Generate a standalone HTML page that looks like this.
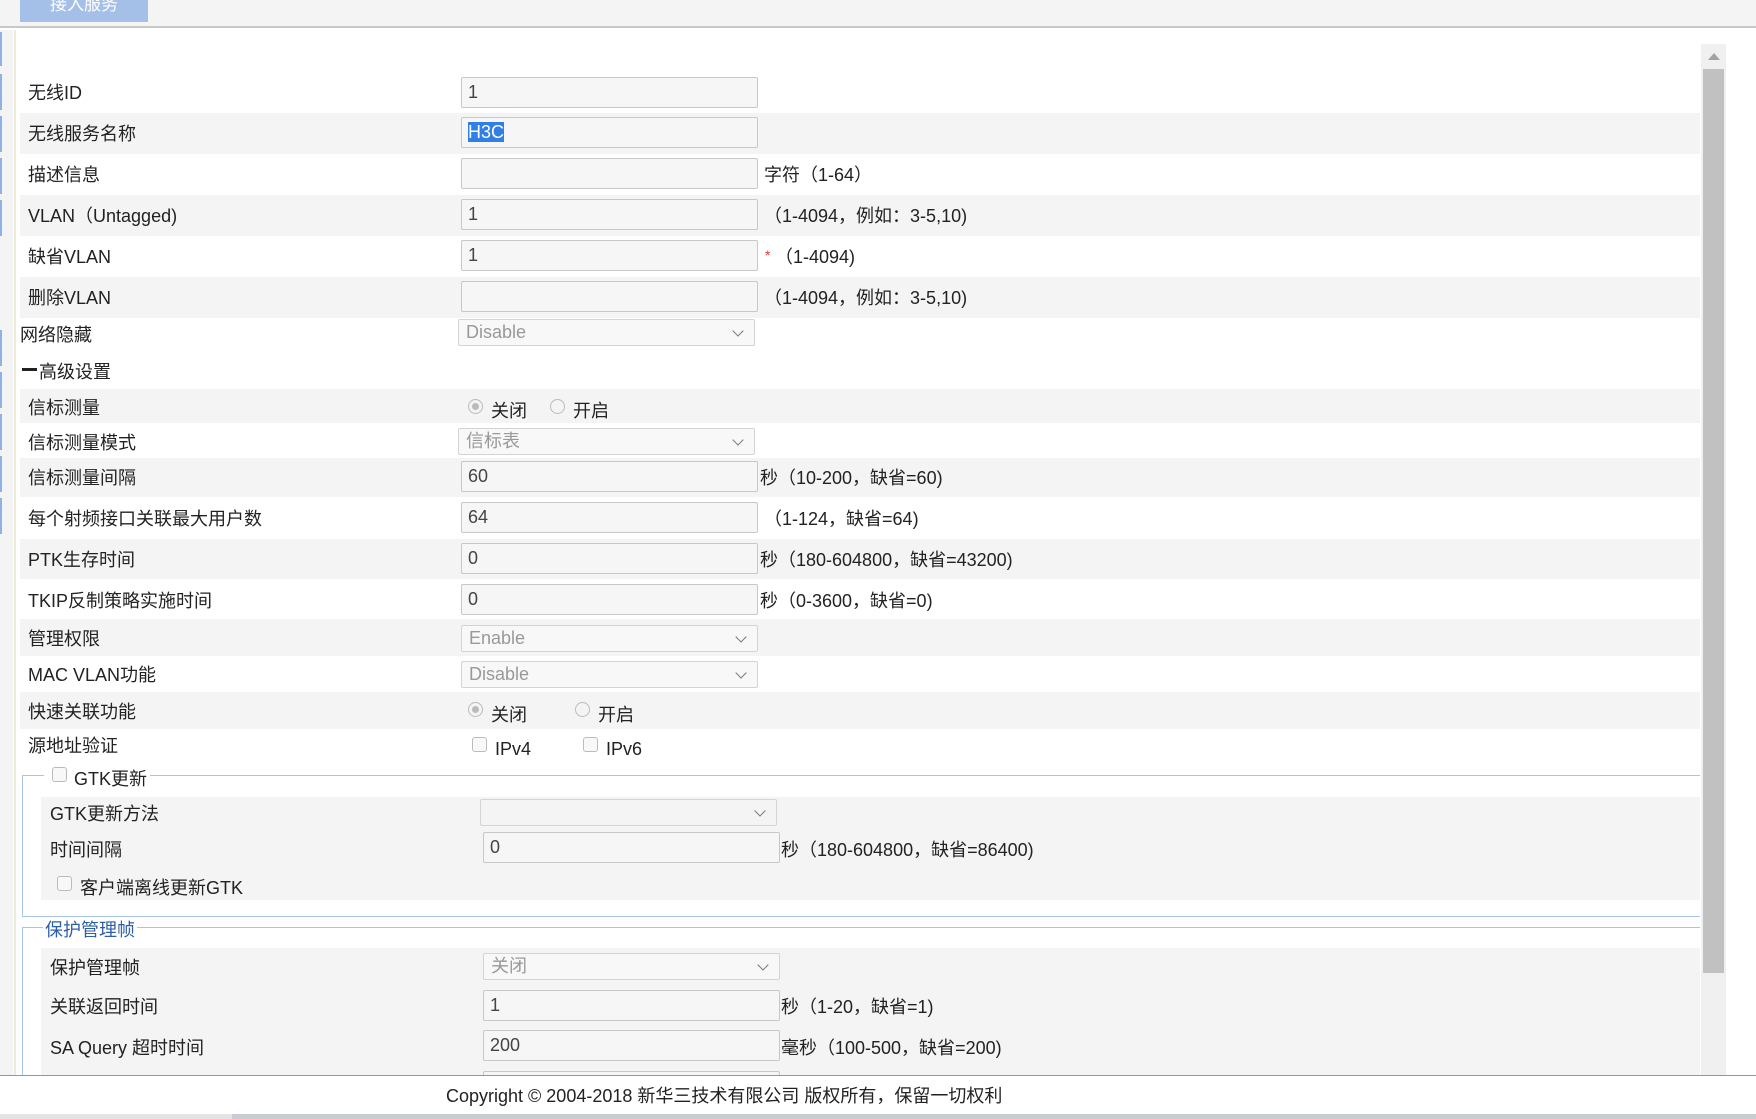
<!DOCTYPE html>
<html><head><meta charset="utf-8">
<style>
*{box-sizing:border-box;margin:0;padding:0}
body{width:1756px;height:1119px;position:relative;overflow:hidden;background:#fff;font-family:"Liberation Sans","Noto Sans CJK SC",sans-serif;font-size:18px;color:#222}
.a{position:absolute}
.row{position:absolute;left:20px;width:1680px}
.g{background:#f4f4f4}
.lb{position:absolute;white-space:nowrap;line-height:20px;margin-top:1px}
.in{position:absolute;width:297px;height:31px;border:1px solid #c8c8c8;border-radius:2px;background:#f6f6f6;padding-left:6px;line-height:29px;font-size:18px;color:#444}
.sel{position:absolute;width:297px;height:27px;border:1px solid #d4d4d4;border-radius:2px;background:#f8f8f8;padding-left:7px;line-height:25px;font-size:18px;color:#999}
.sel:after{content:"";position:absolute;right:12px;top:7px;width:7px;height:7px;border-right:1.5px solid #777;border-bottom:1.5px solid #777;transform:rotate(45deg)}
.rad{position:absolute;width:15px;height:15px;border:1px solid #bbb;border-radius:50%;background:#f4f4f4}
.rad.on:after{content:"";position:absolute;left:3px;top:3px;width:7px;height:7px;border-radius:50%;background:#bbb}
.cb{position:absolute;width:15px;height:15px;border:1px solid #bbb;border-radius:3px;background:#f8f8f8}
.h{position:absolute;white-space:nowrap;line-height:20px;color:#222;margin-top:1px}
</style></head><body>
<div class="a" style="left:0;top:0;width:1756px;height:28px;background:#f4f4f4;border-bottom:2px solid #c8c8c8"></div>
<div class="a" style="left:20px;top:0;width:128px;height:22px;background:#a4c0e8;color:#fff;text-align:center;line-height:10px;font-size:17px;overflow:hidden">接入服务</div>
<div class="a" style="left:0;top:30px;width:13px;height:1045px;background:#f4f4f4"></div>
<div class="a" style="left:14px;top:30px;width:2px;height:1045px;background:#ecebd8"></div>
<div class="a" style="left:0;top:32px;width:2px;height:34px;background:#8fb2e4"></div>
<div class="a" style="left:0;top:74px;width:2px;height:36px;background:#8fb2e4"></div>
<div class="a" style="left:0;top:116px;width:2px;height:36px;background:#8fb2e4"></div>
<div class="a" style="left:0;top:158px;width:2px;height:36px;background:#8fb2e4"></div>
<div class="a" style="left:0;top:200px;width:2px;height:36px;background:#8fb2e4"></div>
<div class="a" style="left:0;top:330px;width:2px;height:36px;background:#8fb2e4"></div>
<div class="a" style="left:0;top:372px;width:2px;height:36px;background:#8fb2e4"></div>
<div class="a" style="left:0;top:414px;width:2px;height:36px;background:#8fb2e4"></div>
<div class="a" style="left:0;top:456px;width:2px;height:36px;background:#8fb2e4"></div>
<div class="a" style="left:0;top:498px;width:2px;height:36px;background:#8fb2e4"></div>
<div class="a" style="left:1701px;top:44px;width:25px;height:1031px;background:#f0f0f0"></div>
<div class="a" style="left:1708px;top:53px;width:0;height:0;border-left:6px solid transparent;border-right:6px solid transparent;border-bottom:7px solid #a3a3a3"></div>
<div class="a" style="left:1703px;top:69px;width:21px;height:904px;background:#c1c1c1"></div>

<div class="row g" style="top:113px;height:41px"></div>
<div class="row g" style="top:195px;height:41px"></div>
<div class="row g" style="top:277px;height:41px"></div>
<div class="row g" style="top:389px;height:34px"></div>
<div class="row g" style="top:458px;height:39px"></div>
<div class="row g" style="top:539px;height:40px"></div>
<div class="row g" style="top:619px;height:37px"></div>
<div class="row g" style="top:692px;height:37px"></div>

<div class="lb" style="left:28px;top:82px">无线ID</div>
<div class="in" style="left:461px;top:77px">1</div>
<div class="lb" style="left:28px;top:123px">无线服务名称</div>
<div class="in" style="left:461px;top:117px"><span style="background:#2f7fe6;color:#fff">H3C</span></div>
<div class="lb" style="left:28px;top:164px">描述信息</div>
<div class="in" style="left:461px;top:158px"></div>
<div class="h" style="left:764px;top:164px">字符（1-64）</div>
<div class="lb" style="left:28px;top:205px">VLAN（Untagged)</div>
<div class="in" style="left:461px;top:199px">1</div>
<div class="h" style="left:764px;top:205px">（1-4094，例如：3-5,10)</div>
<div class="lb" style="left:28px;top:246px">缺省VLAN</div>
<div class="in" style="left:461px;top:240px">1</div>
<div class="h" style="left:765px;top:244px;color:#e33;font-size:14px">*</div>
<div class="h" style="left:775px;top:246px">（1-4094)</div>
<div class="lb" style="left:28px;top:287px">删除VLAN</div>
<div class="in" style="left:461px;top:281px"></div>
<div class="h" style="left:764px;top:287px">（1-4094，例如：3-5,10)</div>
<div class="lb" style="left:20px;top:324px">网络隐藏</div>
<div class="sel" style="left:458px;top:319px">Disable</div>
<div class="a" style="left:22px;top:368px;width:15px;height:3px;background:#222"></div>
<div class="lb" style="left:39px;top:361px">高级设置</div>

<div class="lb" style="left:28px;top:397px">信标测量</div>
<div class="rad on" style="left:468px;top:399px"></div><div class="h" style="left:491px;top:400px">关闭</div>
<div class="rad" style="left:550px;top:399px"></div><div class="h" style="left:573px;top:400px">开启</div>
<div class="lb" style="left:28px;top:432px">信标测量模式</div>
<div class="sel" style="left:458px;top:428px">信标表</div>
<div class="lb" style="left:28px;top:467px">信标测量间隔</div>
<div class="in" style="left:461px;top:461px">60</div>
<div class="h" style="left:760px;top:467px">秒（10-200，缺省=60)</div>
<div class="lb" style="left:28px;top:508px">每个射频接口关联最大用户数</div>
<div class="in" style="left:461px;top:502px">64</div>
<div class="h" style="left:764px;top:508px">（1-124，缺省=64)</div>
<div class="lb" style="left:28px;top:549px">PTK生存时间</div>
<div class="in" style="left:461px;top:543px">0</div>
<div class="h" style="left:760px;top:549px">秒（180-604800，缺省=43200)</div>
<div class="lb" style="left:28px;top:590px">TKIP反制策略实施时间</div>
<div class="in" style="left:461px;top:584px">0</div>
<div class="h" style="left:760px;top:590px">秒（0-3600，缺省=0)</div>
<div class="lb" style="left:28px;top:628px">管理权限</div>
<div class="sel" style="left:461px;top:625px">Enable</div>
<div class="lb" style="left:28px;top:664px">MAC VLAN功能</div>
<div class="sel" style="left:461px;top:661px">Disable</div>
<div class="lb" style="left:28px;top:701px">快速关联功能</div>
<div class="rad on" style="left:468px;top:702px"></div><div class="h" style="left:491px;top:704px">关闭</div>
<div class="rad" style="left:575px;top:702px"></div><div class="h" style="left:598px;top:704px">开启</div>
<div class="lb" style="left:28px;top:735px">源地址验证</div>
<div class="cb" style="left:472px;top:737px"></div><div class="h" style="left:495px;top:738px">IPv4</div>
<div class="cb" style="left:583px;top:737px"></div><div class="h" style="left:606px;top:738px">IPv6</div>

<div class="a" style="left:22px;top:775px;width:1678px;height:142px;border:1px solid #a8c4e8;border-right:none"></div>
<div class="a" style="left:44px;top:766px;width:106px;height:20px;background:#fff"></div>
<div class="cb" style="left:52px;top:767px"></div>
<div class="h" style="left:74px;top:768px">GTK更新</div>
<div class="a g" style="left:41px;top:797px;width:1659px;height:103px"></div>
<div class="lb" style="left:50px;top:803px">GTK更新方法</div>
<div class="sel" style="left:480px;top:799px;background:#f4f4f4"></div>
<div class="lb" style="left:50px;top:839px">时间间隔</div>
<div class="in" style="left:483px;top:832px">0</div>
<div class="h" style="left:781px;top:839px">秒（180-604800，缺省=86400)</div>
<div class="cb" style="left:57px;top:876px"></div>
<div class="h" style="left:80px;top:877px">客户端离线更新GTK</div>

<div class="a" style="left:22px;top:927px;width:1678px;height:160px;border-top:1px solid #a8c4e8;border-left:1px solid #a8c4e8"></div>
<div class="a" style="left:43px;top:917px;width:94px;height:22px;background:#fff"></div>
<div class="h" style="left:45px;top:919px;color:#2d5fa8">保护管理帧</div>
<div class="a g" style="left:41px;top:948px;width:1659px;height:130px"></div>
<div class="lb" style="left:50px;top:957px">保护管理帧</div>
<div class="sel" style="left:483px;top:953px">关闭</div>
<div class="lb" style="left:50px;top:996px">关联返回时间</div>
<div class="in" style="left:483px;top:990px">1</div>
<div class="h" style="left:781px;top:996px">秒（1-20，缺省=1)</div>
<div class="lb" style="left:50px;top:1037px">SA Query 超时时间</div>
<div class="in" style="left:483px;top:1030px">200</div>
<div class="h" style="left:781px;top:1037px">毫秒（100-500，缺省=200)</div>
<div class="in" style="left:483px;top:1071px"></div>

<div class="a" style="left:0;top:1075px;width:1756px;height:39px;background:#fff;border-top:1px solid #6f9fd6"></div>
<div class="h" style="left:446px;top:1085px;font-size:18px">Copyright © 2004-2018 新华三技术有限公司 版权所有，保留一切权利</div>
<div class="a" style="left:0;top:1114px;width:1756px;height:5px;background:#c9ccd0"></div>
<div class="a" style="left:0;top:1114px;width:232px;height:5px;background:#e4e4e4"></div>
</body></html>
